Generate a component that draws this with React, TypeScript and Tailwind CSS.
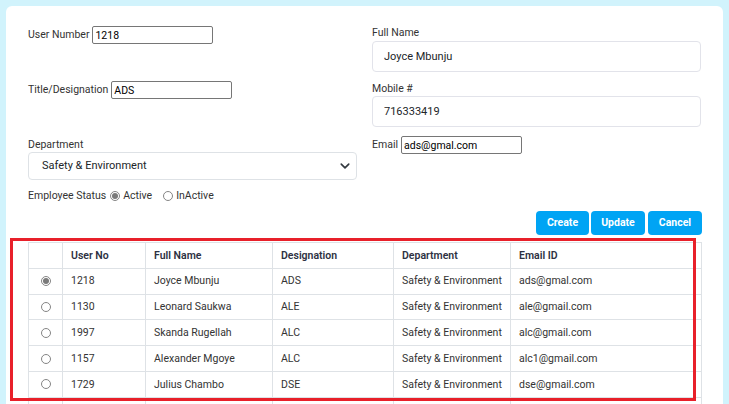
import React, { useState } from 'react';

interface Employee {
    userNo: string;
    fullName: string;
    designation: string;
    department: string;
    email: string;
}

const employees: Employee[] = [
    { userNo: '1218', fullName: 'Joyce Mbunju', designation: 'ADS', department: 'Safety & Environment', email: 'ads@gmal.com' },
    { userNo: '1130', fullName: 'Leonard Saukwa', designation: 'ALE', department: 'Safety & Environment', email: 'ale@gmail.com' },
    { userNo: '1997', fullName: 'Skanda Rugellah', designation: 'ALC', department: 'Safety & Environment', email: 'alc@gmail.com' },
    { userNo: '1157', fullName: 'Alexander Mgoye', designation: 'ALC', department: 'Safety & Environment', email: 'alc1@gmail.com' },
    { userNo: '1729', fullName: 'Julius Chambo', designation: 'DSE', department: 'Safety & Environment', email: 'dse@gmail.com' },
];

const Radio: React.FC<{ checked: boolean; onClick?: () => void }> = ({ checked, onClick }) => (
    <span
        onClick={onClick}
        className="inline-flex items-center justify-center w-[10px] h-[10px] rounded-full border border-[#858585] bg-white cursor-pointer">
        {checked && <span className="w-[6px] h-[6px] rounded-full bg-[#7a7a7a]" />}
    </span>
);

const App: React.FC = () => {
    const [selected, setSelected] = useState<number>(0);
    const [active, setActive] = useState<boolean>(true);
    const current = employees[selected];

    return (
        <div className="relative h-[404px] overflow-hidden bg-[#d1f3fc] pt-[6px] px-[6px] font-['Roboto',sans-serif] text-[10.5px] text-[#333]">
            <div className="bg-white rounded-[6px] px-[22px] pt-[20px] h-[420px]">
                <div className="grid grid-cols-2 gap-x-[15px]">
                    {/* left column */}
                    <div className="flex flex-col">
                        <div className="flex items-center h-[18px]">
                            <span className="mr-[3px]">User Number</span>
                            <input
                                readOnly
                                value={current.userNo}
                                className="w-[121px] h-[18px] border border-[#767676] rounded-[2px] px-[2px] text-[10.5px] text-black outline-none"
                            />
                        </div>
                        <div className="flex items-center h-[18px] mt-[37px]">
                            <span className="mr-[3px]">Title/Designation</span>
                            <input
                                readOnly
                                value={current.designation}
                                className="w-[121px] h-[18px] border border-[#767676] rounded-[2px] px-[2px] text-[10.5px] text-black outline-none"
                            />
                        </div>
                        <div className="mt-[39px] h-[14px] leading-[14px]">Department</div>
                        <div className="flex items-center justify-between h-[28px] border border-[#dee2e6] rounded-[4px] pl-[13px] pr-[6px] text-[11px] text-[#212529]">
                            <span>{current.department}</span>
                            <svg width="10" height="10" viewBox="0 0 16 16" fill="none">
                                <path d="M2 5l6 6 6-6" stroke="#343a40" strokeWidth="2.6" strokeLinecap="round" strokeLinejoin="round" />
                            </svg>
                        </div>
                        <div className="flex items-center h-[12px] mt-[10px]">
                            <span className="mr-[4px]">Employee Status</span>
                            <Radio checked={active} onClick={() => setActive(true)} />
                            <span className="ml-[3px] mr-[11px]">Active</span>
                            <Radio checked={!active} onClick={() => setActive(false)} />
                            <span className="ml-[3px]">InActive</span>
                        </div>
                    </div>

                    {/* right column */}
                    <div className="flex flex-col">
                        <div className="h-[14px] leading-[14px]">Full Name</div>
                        <input
                            readOnly
                            value={current.fullName}
                            className="mt-[1px] h-[31px] border border-[#e2e3ea] rounded-[4px] px-[11px] text-[11px] text-[#212529] outline-none"
                        />
                        <div className="mt-[10px] h-[14px] leading-[14px]">Mobile #</div>
                        <input
                            readOnly
                            value="716333419"
                            className="h-[31px] border border-[#e2e3ea] rounded-[4px] px-[11px] text-[11px] text-[#212529] outline-none"
                        />
                        <div className="flex items-center h-[18px] mt-[9px]">
                            <span className="mr-[3px]">Email</span>
                            <input
                                readOnly
                                value={current.email}
                                className="w-[121px] h-[18px] border border-[#767676] rounded-[2px] px-[2px] text-[10.5px] text-black outline-none"
                            />
                        </div>
                    </div>
                </div>

                <div className="flex justify-end gap-[2px] mt-[9px] -mr-[1px]">
                    <button className="w-[53px] h-[24px] rounded-[4px] bg-[#00a4f4] text-white font-bold text-[10.5px]">Create</button>
                    <button className="w-[54px] h-[24px] rounded-[4px] bg-[#00a4f4] text-white font-bold text-[10.5px]">Update</button>
                    <button className="w-[54px] h-[24px] rounded-[4px] bg-[#00a4f4] text-white font-bold text-[10.5px] ml-[1px]">Cancel</button>
                </div>

                <table className="mt-[7px] w-[673px] border-collapse table-fixed text-[10.5px] text-[#333]">
                    <colgroup>
                        <col className="w-[34px]" />
                        <col className="w-[83px]" />
                        <col className="w-[127px]" />
                        <col className="w-[121px]" />
                        <col className="w-[117px]" />
                        <col className="w-[191px]" />
                    </colgroup>
                    <thead>
                        <tr className="h-[25.8px] text-left text-[#2d3142]">
                            <th className="border border-[#dee2e6]"></th>
                            <th className="border border-[#dee2e6] pl-[8px] font-semibold">User No</th>
                            <th className="border border-[#dee2e6] pl-[8px] font-semibold">Full Name</th>
                            <th className="border border-[#dee2e6] pl-[8px] font-semibold">Designation</th>
                            <th className="border border-[#dee2e6] pl-[8px] font-semibold">Department</th>
                            <th className="border border-[#dee2e6] pl-[8px] font-semibold">Email ID</th>
                        </tr>
                    </thead>
                    <tbody>
                        {employees.map((emp, i) => (
                            <tr key={emp.userNo} className="h-[25.8px]">
                                <td className="border border-[#dee2e6] text-center">
                                    <span className="flex justify-center">
                                        <Radio checked={selected === i} onClick={() => setSelected(i)} />
                                    </span>
                                </td>
                                <td className="border border-[#dee2e6] pl-[8px]">{emp.userNo}</td>
                                <td className="border border-[#dee2e6] pl-[8px]">{emp.fullName}</td>
                                <td className="border border-[#dee2e6] pl-[8px]">{emp.designation}</td>
                                <td className="border border-[#dee2e6] pl-[8px]">{emp.department}</td>
                                <td className="border border-[#dee2e6] pl-[8px]">{emp.email}</td>
                            </tr>
                        ))}
                        <tr className="h-[25.8px]">
                            <td className="border border-[#dee2e6]"></td>
                            <td className="border border-[#dee2e6]"></td>
                            <td className="border border-[#dee2e6]"></td>
                            <td className="border border-[#dee2e6]"></td>
                            <td className="border border-[#dee2e6]"></td>
                            <td className="border border-[#dee2e6]"></td>
                        </tr>
                    </tbody>
                </table>
            </div>

            {/* red highlight annotation over the table */}
            <div className="absolute left-[10px] top-[238px] w-[686px] h-[163px] border-[3px] border-[#e8202a] pointer-events-none" />
        </div>
    );
};

export default App;
